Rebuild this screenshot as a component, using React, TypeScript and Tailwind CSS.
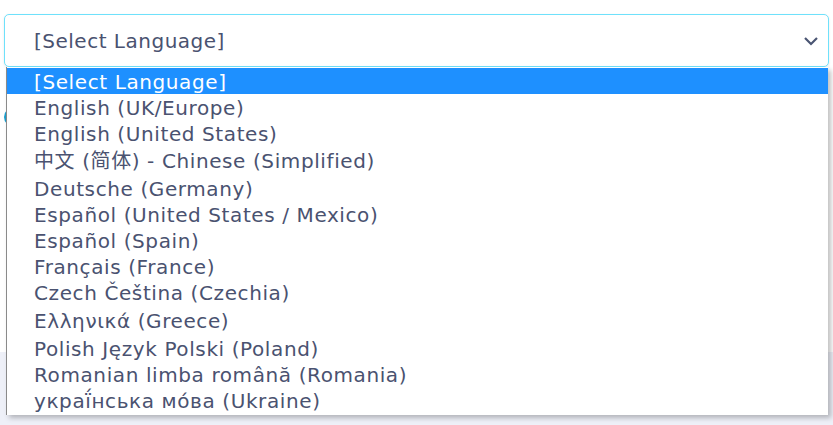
import React from 'react';

const languages = [
  { label: '[Select Language]', h: 'h-[26px]' },
  { label: 'English (UK/Europe)', h: 'h-[26px]' },
  { label: 'English (United States)', h: 'h-[26px]' },
  { label: '中文 (简体) - Chinese (Simplified)', h: 'h-[29px]' },
  { label: 'Deutsche (Germany)', h: 'h-[26px]' },
  { label: 'Español (United States / Mexico)', h: 'h-[26px]' },
  { label: 'Español (Spain)', h: 'h-[26px]' },
  { label: 'Français (France)', h: 'h-[26px]' },
  { label: 'Czech Čeština (Czechia)', h: 'h-[26px]' },
  { label: 'Ελληνικά (Greece)', h: 'h-[30px]' },
  { label: 'Polish Język Polski (Poland)', h: 'h-[26px]' },
  { label: 'Romanian limba română (Romania)', h: 'h-[26px]' },
  { label: 'украї́нська мо́ва (Ukraine)', h: 'h-[26px]' },
];

export default function App() {
  return (
    <div
      className="relative w-[833px] h-[425px] overflow-hidden bg-white text-[#4a5270]"
      style={{ fontFamily: '"DejaVu Sans", "Noto Sans CJK SC", sans-serif' }}
    >
      {/* page content behind the open list */}
      <div className="flex flex-col h-full">
        <div className="h-[352px] bg-white relative">
          <div className="absolute left-[4px] top-[107px] w-[20px] h-[20px] rounded-full bg-[#1aa0cf]" />
        </div>
        <div className="flex-1 bg-[#eef0f8]" />
      </div>

      {/* select box */}
      <div className="absolute left-[4px] top-[14px] w-[825px] h-[53px] rounded-[5px] border border-[#6fe1fb] bg-white flex items-center pl-[29px] pr-[8px] shadow-[0_1px_3px_rgba(0,0,0,0.08)]">
        <span className="flex-1 text-[20px] tracking-[0.5px]">[Select Language]</span>
        <svg width="16" height="10" viewBox="0 0 16 10" className="mr-[1px]">
          <path d="M2 2 L8 8 L14 2" fill="none" stroke="#4a5573" strokeWidth="2.2" />
        </svg>
      </div>

      {/* open option list */}
      <div className="absolute left-[6px] top-[67px] w-[822px] h-[348px] bg-white border-l border-[#8a8a8a] shadow-[3px_3px_5px_rgba(0,0,0,0.25)] flex flex-col pt-[1px]">
        {languages.map((l, i) => (
          <div
            key={l.label}
            className={`${l.h} flex items-center pl-[27px] pt-[1px] text-[20px] tracking-[0.6px] whitespace-nowrap ${
              i === 0 ? 'bg-[#1e90ff] text-white' : ''
            }`}
          >
            {l.label}
          </div>
        ))}
      </div>
    </div>
  );
}
